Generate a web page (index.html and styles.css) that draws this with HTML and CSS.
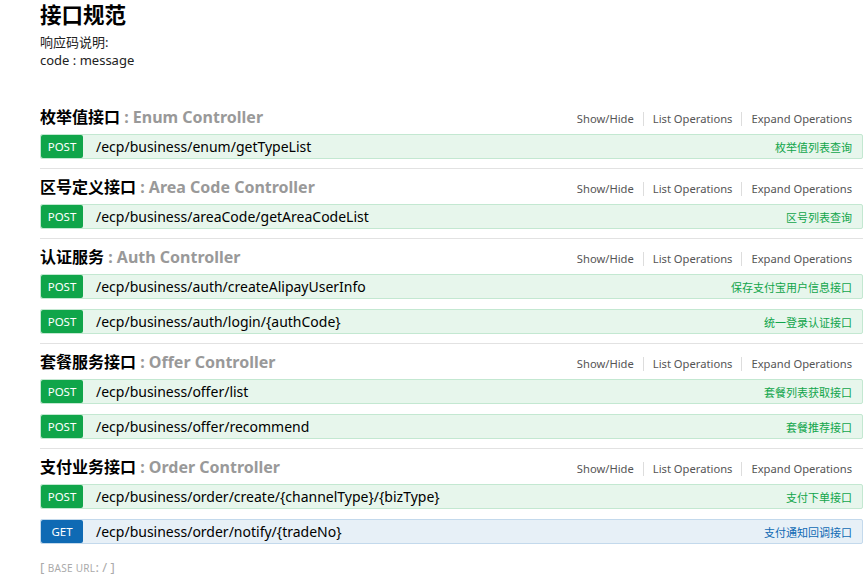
FILE: index.html
```html
<!DOCTYPE html>
<html lang="zh">
<head>
<meta charset="utf-8">
<title>接口规范</title>
<link rel="stylesheet" href="styles.css">
</head>
<body>
<div class="page">
  <h1 class="title">接口规范</h1>
  <div class="desc">响应码说明:<br>code : message</div>

  <ul class="resources">
    <li class="resource">
      <div class="heading">
        <h2><span class="cn">枚举值接口</span><span class="en"> : Enum Controller</span></h2>
        <ul class="options"><li>Show/Hide</li><li>List Operations</li><li>Expand Operations</li></ul>
      </div>
      <ul class="ops">
        <li class="op post"><span class="method">POST</span><span class="path">/ecp/business/enum/getTypeList</span><span class="summary">枚举值列表查询</span></li>
      </ul>
    </li>
    <li class="resource">
      <div class="heading">
        <h2><span class="cn">区号定义接口</span><span class="en"> : Area Code Controller</span></h2>
        <ul class="options"><li>Show/Hide</li><li>List Operations</li><li>Expand Operations</li></ul>
      </div>
      <ul class="ops">
        <li class="op post"><span class="method">POST</span><span class="path">/ecp/business/areaCode/getAreaCodeList</span><span class="summary">区号列表查询</span></li>
      </ul>
    </li>
    <li class="resource">
      <div class="heading">
        <h2><span class="cn">认证服务</span><span class="en"> : Auth Controller</span></h2>
        <ul class="options"><li>Show/Hide</li><li>List Operations</li><li>Expand Operations</li></ul>
      </div>
      <ul class="ops">
        <li class="op post"><span class="method">POST</span><span class="path">/ecp/business/auth/createAlipayUserInfo</span><span class="summary">保存支付宝用户信息接口</span></li>
        <li class="op post"><span class="method">POST</span><span class="path">/ecp/business/auth/login/{authCode}</span><span class="summary">统一登录认证接口</span></li>
      </ul>
    </li>
    <li class="resource">
      <div class="heading">
        <h2><span class="cn">套餐服务接口</span><span class="en"> : Offer Controller</span></h2>
        <ul class="options"><li>Show/Hide</li><li>List Operations</li><li>Expand Operations</li></ul>
      </div>
      <ul class="ops">
        <li class="op post"><span class="method">POST</span><span class="path">/ecp/business/offer/list</span><span class="summary">套餐列表获取接口</span></li>
        <li class="op post"><span class="method">POST</span><span class="path">/ecp/business/offer/recommend</span><span class="summary">套餐推荐接口</span></li>
      </ul>
    </li>
    <li class="resource">
      <div class="heading">
        <h2><span class="cn">支付业务接口</span><span class="en"> : Order Controller</span></h2>
        <ul class="options"><li>Show/Hide</li><li>List Operations</li><li>Expand Operations</li></ul>
      </div>
      <ul class="ops">
        <li class="op post"><span class="method">POST</span><span class="path">/ecp/business/order/create/{channelType}/{bizType}</span><span class="summary">支付下单接口</span></li>
        <li class="op get"><span class="method">GET</span><span class="path">/ecp/business/order/notify/{tradeNo}</span><span class="summary">支付通知回调接口</span></li>
      </ul>
    </li>
  </ul>

  <div class="base">[ <span class="small">Base URL</span>: / ]</div>
</div>
</body>
</html>
```

FILE: styles.css
```css
html, body {
  margin: 0;
  padding: 0;
  background: #fff;
}
body {
  font-family: "Noto Sans", "Noto Sans CJK SC", sans-serif;
  color: #000;
}
.page {
  padding: 0 5px 0 40px;
}
.title {
  margin: 0;
  font-size: 21.5px;
  line-height: 30px;
  font-weight: bold;
}
.desc {
  margin-top: 3px;
  font-size: 13px;
  line-height: 18px;
  color: #222;
}
.resources {
  list-style: none;
  margin: 35px 0 0;
  padding: 0;
}
.resource {
  border-bottom: 1px solid #e2e2e2;
  padding-bottom: 9px;
  margin-bottom: 5px;
}
.resource:last-child {
  border-bottom: none;
  padding-bottom: 0;
  margin-bottom: 0;
}
.heading {
  display: flex;
  align-items: center;
  justify-content: space-between;
  height: 26px;
  margin-bottom: 4px;
}
.heading h2 {
  margin: 0;
  font-size: 16px;
  font-weight: bold;
  line-height: 26px;
}
.heading .cn {
  color: #000;
}
.heading .en {
  color: #999;
}
.options {
  list-style: none;
  margin: 0;
  padding: 4px 11px 0 0;
  display: flex;
  align-items: center;
}
.options li {
  font-size: 11.2px;
  line-height: 14px;
  color: #555;
  padding: 0 9px;
  border-right: 1px solid #ddd;
}
.options li:last-child {
  border-right: none;
  padding-right: 0;
}
.ops {
  list-style: none;
  margin: 0;
  padding: 0;
  display: flex;
  flex-direction: column;
  gap: 10px;
}
.op {
  display: flex;
  align-items: center;
  height: 23px;
  border: 1px solid #c3e8d1;
  background: #e7f6ec;
  border-radius: 2px;
}
.op .method {
  width: 42px;
  height: 23px;
  border-radius: 2px;
  background: #10a54a;
  color: #fff;
  font-size: 11.5px;
  line-height: 24px;
  text-align: center;
}
.op .path {
  flex: 1;
  padding-left: 13px;
  font-size: 14px;
  color: #000;
}
.op .summary {
  padding-right: 10px;
  font-size: 11px;
  color: #10a54a;
}
.op.get {
  border-color: #c3d9ec;
  background: #e7f0f7;
}
.op.get .method {
  background: #0f6ab4;
}
.op.get .summary {
  color: #0f6ab4;
}
.base {
  margin-top: 14px;
  font-size: 13px;
  line-height: 18px;
  color: #aaa;
}
.base .small {
  text-transform: uppercase;
  font-size: 10px;
  letter-spacing: 0.3px;
}
```
